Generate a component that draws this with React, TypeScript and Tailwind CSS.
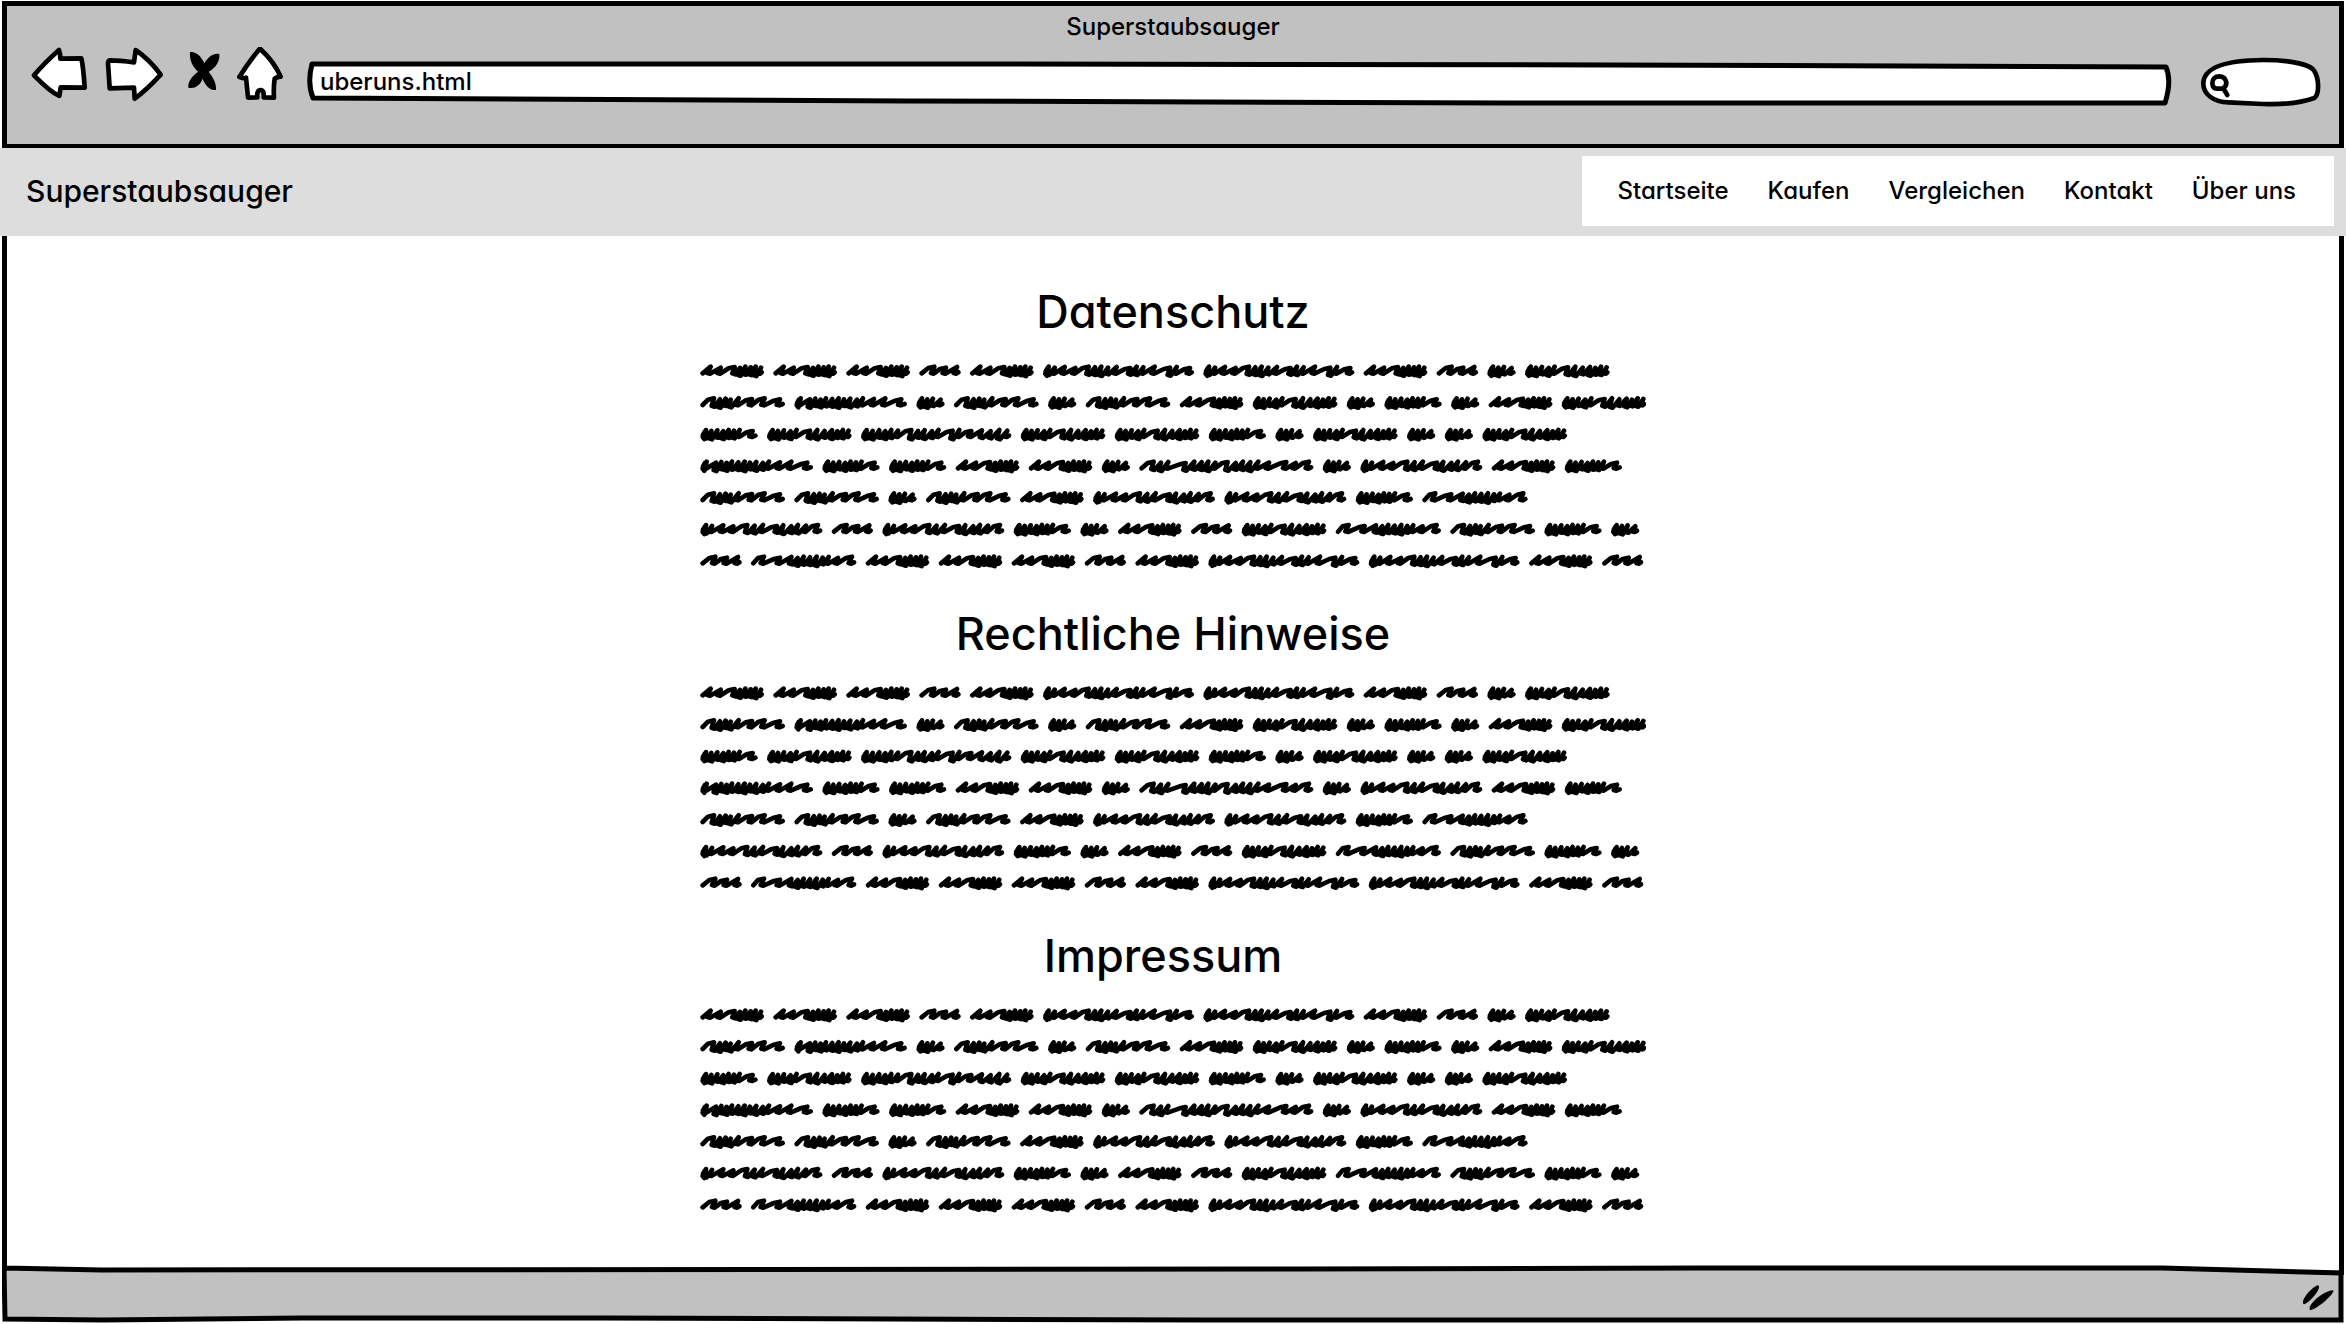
import type { ReactNode } from 'react';

type Stroke = { width: number; thinStart?: boolean; peaks: number[] };

/* Scribbled words: the x positions at which the pen reaches the top of the line. */
const WORDS: Record<string, Stroke> = {
  a: { width: 193, thinStart: true, peaks: [34, 64, 106, 122, 138, 154, 169, 185] },
  b: { width: 126, thinStart: true, peaks: [48, 83, 116] },
  c: { width: 87, peaks: [20, 36, 53, 76] },
  d: { width: 174, peaks: [20, 36, 54, 72, 88, 104, 121, 160] },
  e: { width: 256, thinStart: true, peaks: [44, 62, 79, 94, 118, 158, 196, 242] },
  f: { width: 340, peaks: [22, 50, 66, 82, 98, 117, 136, 152, 171, 191, 209, 242, 276, 324] },
  g: { width: 455, peaks: [20, 38, 68, 100, 140, 159, 178, 198, 224, 265, 284, 304, 338, 384, 404, 444] },
  h: { width: 368, peaks: [20, 38, 72, 102, 144, 166, 191, 233, 252, 276, 296, 320, 356] },
  i: { width: 318, thinStart: true, peaks: [42, 90, 124, 143, 161, 180, 200, 218, 236, 264, 306] },
  j: { width: 524, thinStart: true, peaks: [46, 68, 90, 142, 168, 190, 210, 231, 268, 292, 314, 336, 360, 392, 444, 472, 512] },
  k: { width: 256, peaks: [20, 36, 54, 74, 92, 132, 154, 176, 198, 214, 231, 248] },
  l: { width: 453, peaks: [20, 38, 58, 76, 94, 114, 154, 174, 194, 216, 236, 278, 298, 334, 366, 392, 418, 442] },
};

const LINES = ['aaabaggabck', 'efceceakcdcak', 'dklkkdckcck', 'fddaacjchad', 'eeceahhdi', 'hbhdcabkiedc', 'biaaabaggab'];

const WORD_GAP = 26;
const LINE_PITCH = 95;
const TOPS = [8, 11, 9, 12, 8, 10];
const DEPTHS = [33, 36, 31, 35, 32];

function scribble({ width, thinStart, peaks }: Stroke) {
  let d = thinStart ? 'M8 28' : 'M9 22 L15 12 L8 29 L13 35';
  peaks.forEach((x, i) => {
    const before = i === 0 ? 0 : peaks[i - 1];
    const next = i + 1 < peaks.length ? peaks[i + 1] : width + 20;
    const top = TOPS[i % TOPS.length];
    const dense = next - x < 27;
    if (x - before > 34) d += ` L${x - 20} ${top + 4}`;
    d += ` L${x - 2} ${top}`;
    if (dense) d += ` L${x - 9} ${DEPTHS[i % DEPTHS.length] - 3} L${x} ${DEPTHS[i % DEPTHS.length]}`;
    else d += ` L${x - 12} 27 L${x - 4} 29`;
  });
  return `${d} L${width - 8} 25`;
}

function Scribbles() {
  return (
    <svg viewBox="0 0 2838 666" className="block w-full" fill="none" stroke="#000" strokeWidth="14" strokeLinecap="round" strokeLinejoin="round" aria-hidden="true">
      {LINES.map((line, row) => {
        let x = 0;
        return [...line].map((key, i) => {
          const left = x;
          x += WORDS[key].width + WORD_GAP;
          return <path key={`${row}-${i}`} d={scribble(WORDS[key])} transform={`translate(${left} ${row * LINE_PITCH})`} />;
        });
      })}
    </svg>
  );
}

function Section({ title, className = '' }: { title: string; className?: string }) {
  return (
    <section>
      <h2 className={`mb-6 text-center text-[45px] leading-[56px] font-medium ${className}`}>{title}</h2>
      <Scribbles />
    </section>
  );
}

function ToolButton({ label, viewBox, className, children }: { label: string; viewBox: string; className: string; children: ReactNode }) {
  return (
    <button type="button" aria-label={label} className={`h-14 shrink-0 ${className}`}>
      <svg viewBox={viewBox} className="block h-full w-full" fill="#fff" stroke="#000" strokeWidth="14" strokeLinejoin="round">
        {children}
      </svg>
    </button>
  );
}

function BrowserBar() {
  return (
    <header className="mx-0.5 mt-px border-x-[5px] border-t-[5px] border-b-4 border-black bg-[#c1c1c1] pt-px pb-[37px]">
      <h1 className="text-center text-2xl leading-10">Superstaubsauger</h1>
      <div className="flex items-start pr-[18px] pl-6">
        <ToolButton label="Zurück" viewBox="93 141 168 168" className="w-14">
          <path d="M102 226 Q132 190 177 150 Q181 160 181 176 L244 175 Q250 200 254 263 L182 262 Q180 275 178 288 Q150 275 102 226Z" />
        </ToolButton>
        <ToolButton label="Vorwärts" viewBox="315 141 174 168" className="ml-[18px] w-[58px]">
          <path d="M330 181 Q360 181 402 187 L407 150 Q450 180 482 224 Q440 270 404 296 L402 263 L329 265 Q327 230 324 190 Q324 182 330 181Z" />
        </ToolButton>
        <ToolButton label="Abbrechen" viewBox="561 141 102 168" className="ml-6 w-[34px]">
          <path fill="#000" stroke="none" d="M570 156 C590 154 604 170 613 190 C624 170 642 158 658 162 C661 184 646 204 626 215 C640 234 650 250 648 270 C630 272 617 258 608 236 C600 256 585 267 565 263 C563 245 576 228 594 215 C576 198 568 178 570 156Z" />
        </ToolButton>
        <ToolButton label="Startseite" viewBox="711 141 138 168" className="ml-4 w-[46px]">
          <path d="M780 146 Q750 180 718 231 Q728 236 738 233 Q742 270 744 293 L772 292 Q770 270 782 270 Q793 271 791 292 L822 293 Q820 262 824 236 Q832 230 842 230 Q822 184 780 146Z" />
        </ToolButton>
        <div className="relative mt-3.5 ml-6 h-[45px] flex-1">
          <svg viewBox="0 0 1865 45" preserveAspectRatio="none" className="absolute inset-0 h-full w-full" fill="#fff" stroke="#000" strokeWidth="5" strokeLinejoin="round" aria-hidden="true">
            <path d="M5 3 L700 3 L1300 4 L1859 6 Q1865 20 1858 42 L1200 42 L600 40 L6 37 Q0 22 5 3Z" vectorEffect="non-scaling-stroke" />
          </svg>
          <input type="text" aria-label="Adresse" defaultValue="uberuns.html" className="relative block h-10 w-full bg-transparent px-[13px] text-2xl outline-none" />
        </div>
        <div className="relative mt-2.5 ml-[29px] h-[50px] w-[120px] shrink-0">
          <svg viewBox="243 170 360 150" className="absolute inset-0 h-full w-full" fill="#fff" stroke="#000" strokeWidth="14" strokeLinecap="round" strokeLinejoin="round" aria-hidden="true">
            <path d="M250 250 C250 200 320 180 430 179 C520 179 575 195 583 212 C597 235 599 280 583 293 C540 308 480 313 430 311 L325 306 C280 306 250 280 250 250Z" />
            <path d="M298 228 C285 228 277 236 277 248 Q278 265 290 265 L308 264 Q320 258 319 246 Q315 228 298 228Z M311 266 L322 284" />
          </svg>
          <input type="search" aria-label="Suche" className="relative block h-full w-full bg-transparent pr-4 pl-8 text-xl outline-none" />
        </div>
      </div>
    </header>
  );
}

const LINKS = ['Startseite', 'Kaufen', 'Vergleichen', 'Kontakt', 'Über uns'];

export default function App() {
  return (
    <div className="flex min-h-screen flex-col bg-white pb-px font-['Inter',sans-serif] font-medium text-black [font-feature-settings:'cv11']">
      <BrowserBar />
      <div className="flex items-center justify-between bg-[#dddddd] pt-2 pr-3 pb-2.5 pl-[26px]">
        <a href="#" className="text-3xl leading-10">Superstaubsauger</a>
        <nav className="flex h-[70px] items-center gap-[39px] bg-white pr-[38px] pl-9 text-2xl">
          {LINKS.map((link) => (
            <a key={link} href="#">{link}</a>
          ))}
        </nav>
      </div>
      <main className="mx-0.5 flex-1 border-x-[5px] border-black pt-12">
        <div className="mx-auto flex w-full max-w-[946px] flex-col gap-5">
          <Section title="Datenschutz" />
          <Section title="Rechtliche Hinweise" />
          <Section title="Impressum" className="pr-5" />
        </div>
      </main>
      <footer className="relative mx-0.5 flex h-[58px] items-center justify-end pr-2.5">
        <svg viewBox="0 0 2342 58" preserveAspectRatio="none" className="absolute inset-0 h-full w-full" fill="#c1c1c1" stroke="#000" strokeWidth="5" aria-hidden="true">
          <path d="M2 3 L100 5 L1300 4 L1700 3 L2160 3 L2339 8 L2339 55 L1200 55 L600 53 L300 53 L100 55 L3 54Z M2.5 0 L2.5 6 M2339.5 0 L2339.5 10" />
        </svg>
        <svg viewBox="608 138 96 78" className="relative mt-2 h-[26px] w-8" aria-hidden="true">
          <path d="M613 196 C602 184 640 142 656 139 C670 144 632 192 613 196Z M632 214 C622 198 674 154 702 154 C706 162 662 206 632 214Z" />
        </svg>
      </footer>
    </div>
  );
}
